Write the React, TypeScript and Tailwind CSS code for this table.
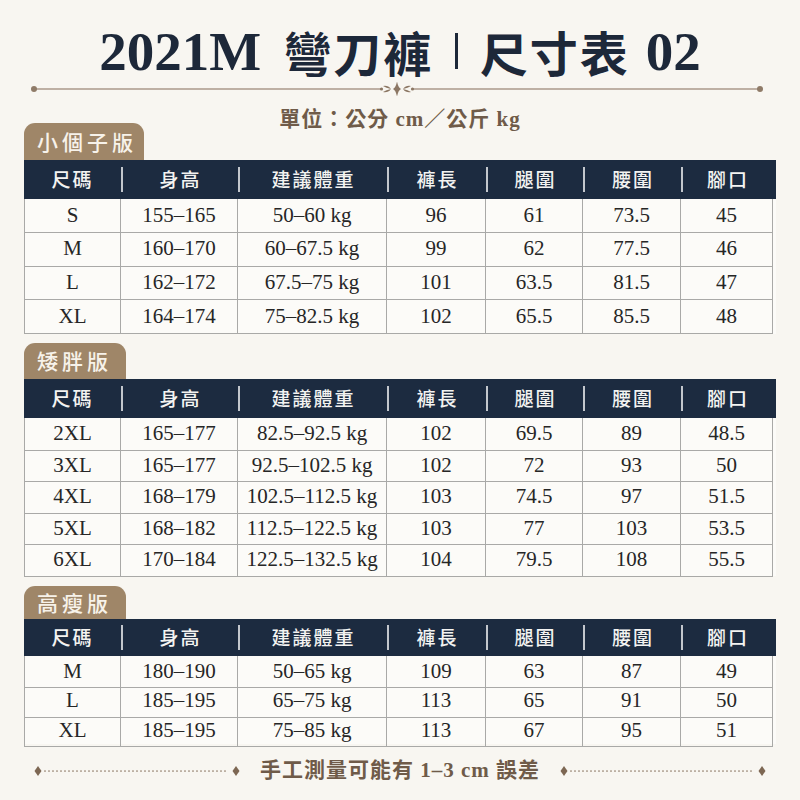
import React from "react";

const COLS = ["尺碼", "身高", "建議體重", "褲長", "腿圍", "腰圍", "腳口"];
const GRID = "grid grid-cols-[97px_117px_149px_99px_97px_98px_92px]";

type Tbl = {
  tab: string;
  tabCls: string;
  headCls: string;
  rowCls: string;
  gapCls: string;
  rows: string[][];
};

const TABLES: Tbl[] = [
  {
    tab: "小個子版",
    tabCls: "h-[37px] w-[120px]",
    headCls: "h-[39px]",
    rowCls: "h-[33.75px]",
    gapCls: "mt-0",
    rows: [
      ["S", "155–165", "50–60 kg", "96", "61", "73.5", "45"],
      ["M", "160–170", "60–67.5 kg", "99", "62", "77.5", "46"],
      ["L", "162–172", "67.5–75 kg", "101", "63.5", "81.5", "47"],
      ["XL", "164–174", "75–82.5 kg", "102", "65.5", "85.5", "48"],
    ],
  },
  {
    tab: "矮胖版",
    tabCls: "h-[36px] w-[102px]",
    headCls: "h-[39px]",
    rowCls: "h-[31.6px]",
    gapCls: "mt-[9px]",
    rows: [
      ["2XL", "165–177", "82.5–92.5 kg", "102", "69.5", "89", "48.5"],
      ["3XL", "165–177", "92.5–102.5 kg", "102", "72", "93", "50"],
      ["4XL", "168–179", "102.5–112.5 kg", "103", "74.5", "97", "51.5"],
      ["5XL", "168–182", "112.5–122.5 kg", "103", "77", "103", "53.5"],
      ["6XL", "170–184", "122.5–132.5 kg", "104", "79.5", "108", "55.5"],
    ],
  },
  {
    tab: "高瘦版",
    tabCls: "h-[33px] w-[102px]",
    headCls: "h-[37px]",
    rowCls: "h-[29.3px]",
    gapCls: "mt-[10px]",
    rows: [
      ["M", "180–190", "50–65 kg", "109", "63", "87", "49"],
      ["L", "185–195", "65–75 kg", "113", "65", "91", "50"],
      ["XL", "185–195", "75–85 kg", "113", "67", "95", "51"],
    ],
  },
];

const SERIF = "font-['Liberation_Serif','Noto_Sans_CJK_TC',serif]";

function Tab({ t }: { t: Tbl }) {
  return (
    <div
      className={`${t.tabCls} rounded-t-[11px] bg-[#9f8668] flex items-center pl-[13px] text-[21px] font-medium tracking-[4px] text-[#f7f2ea] font-['Noto_Sans_CJK_TC',sans-serif]`}
    >
      {t.tab}
    </div>
  );
}

function Header({ t }: { t: Tbl }) {
  return (
    <div className={`${GRID} ${t.headCls} bg-[#1c2b40]`}>
      {COLS.map((c, i) => (
        <div key={c} className="flex items-center">
          {i > 0 ? <div className="w-[2px] h-[25px] bg-[#c3c7cd]" /> : null}
          <span className="flex-1 text-center text-[19px] font-medium tracking-[2px] text-[#f3f3f1] font-['Noto_Sans_CJK_TC',sans-serif]">
            {c}
          </span>
        </div>
      ))}
    </div>
  );
}

function Body({ t }: { t: Tbl }) {
  return (
    <div className="bg-[#fcfbf8]">
      {t.rows.map((r, ri) => (
        <div key={ri} className={`${GRID} ${t.rowCls}`}>
          {r.map((v, ci) => (
            <div
              key={ci}
              className={`flex items-center justify-center border-b border-r border-[#a9a9a7] text-[21px] text-[#262626] ${SERIF} ${
                ci === 0 ? "border-l" : ""
              }`}
            >
              {v}
            </div>
          ))}
        </div>
      ))}
    </div>
  );
}

function Ornament() {
  return (
    <svg width="732" height="14" viewBox="0 0 732 14">
      <line x1="3" y1="7" x2="729" y2="7" stroke="#ab998a" strokeWidth="1.6" />
      <circle cx="3" cy="7" r="3" fill="#8f7b68" />
      <circle cx="729" cy="7" r="3" fill="#8f7b68" />
      <rect x="350" y="0" width="32" height="14" fill="#f8f6f1" />
      <g transform="translate(366 7)" fill="#8c7764">
        <path d="M0,-7.5 Q1.3,-1.3 4,0 Q1.3,1.3 0,7.5 Q-1.3,1.3 -4,0 Q-1.3,-1.3 0,-7.5 Z" />
        <path d="M-6,0 Q-9,-4 -14,-3 Q-11,-1 -6,0 Z" />
        <path d="M-6,0 Q-9,4 -14,3 Q-11,1 -6,0 Z" />
        <circle cx="-15.5" cy="0" r="1.6" />
        <path d="M6,0 Q9,-4 14,-3 Q11,-1 6,0 Z" />
        <path d="M6,0 Q9,4 14,3 Q11,1 6,0 Z" />
        <circle cx="15.5" cy="0" r="1.6" />
      </g>
    </svg>
  );
}

function Dotted() {
  return (
    <svg width="206" height="12" viewBox="0 0 206 12">
      <line
        x1="11"
        y1="6"
        x2="195"
        y2="6"
        stroke="#8d7966"
        strokeWidth="1.7"
        strokeDasharray="0 4"
        strokeLinecap="round"
      />
      <path d="M4,1 L7.5,6 L4,11 L0.5,6 Z" fill="#7d6753" />
      <path d="M202,1 L205.5,6 L202,11 L198.5,6 Z" fill="#7d6753" />
    </svg>
  );
}

export default function App() {
  return (
    <div className="w-[800px] h-[800px] bg-[#f8f6f1] overflow-hidden">
      {/* Title */}
      <div className="pt-[18px] h-[84px] flex items-center justify-center text-[#1d2839]">
        <div className="flex items-center h-[66px]">
          <span className="font-['Liberation_Serif',serif] font-bold text-[55px] leading-none">2021M</span>
          <span className="ml-[22px] font-['Noto_Sans_CJK_TC',sans-serif] font-bold text-[48px] leading-none tracking-[2px]">
            彎刀褲
          </span>
          <span className="ml-[22px] w-[2.5px] h-[36px] bg-[#1d2839]" />
          <span className="ml-[22px] font-['Noto_Sans_CJK_TC',sans-serif] font-bold text-[48px] leading-none tracking-[2px]">
            尺寸表
          </span>
          <span className="ml-[16px] font-['Liberation_Serif',serif] font-bold text-[55px] leading-none">02</span>
        </div>
      </div>

      {/* Ornament line */}
      <div className="h-[10px] flex items-center pl-[31px]">
        <Ornament />
      </div>

      {/* Tables */}
      <div className="px-[24px]">
        {TABLES.map((t, i) => (
          <div key={t.tab} className={t.gapCls}>
            {i === 0 ? (
              <div className="mt-[14px] h-[52px] grid">
                <div className="col-start-1 row-start-1 self-end">
                  <Tab t={t} />
                </div>
                <div className="col-start-1 row-start-1 self-start justify-self-center h-[24px] flex items-center text-[21px] font-bold tracking-[1px] text-[#6f5b49] font-['Liberation_Serif','Noto_Sans_CJK_TC',serif]">
                  單位：公分 cm／公斤 kg
                </div>
              </div>
            ) : (
              <Tab t={t} />
            )}
            <Header t={t} />
            <Body t={t} />
          </div>
        ))}
      </div>

      {/* Footer */}
      <div className="mt-[15px] h-[24px] flex items-center justify-center gap-[20px]">
        <Dotted />
        <span className="text-[21px] font-bold tracking-[1px] text-[#6f5b49] font-['Liberation_Serif','Noto_Sans_CJK_TC',serif] leading-none">
          手工測量可能有 1–3 cm 誤差
        </span>
        <Dotted />
      </div>
    </div>
  );
}
